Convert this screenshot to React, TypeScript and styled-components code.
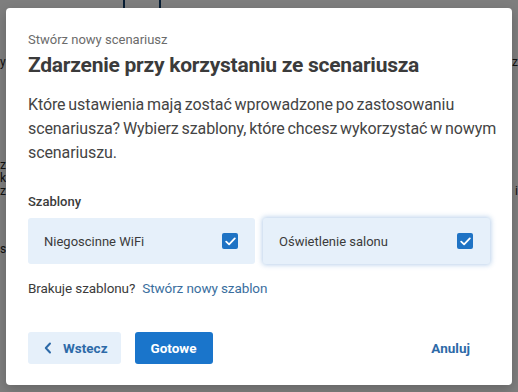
import React from 'react';
import styled, { createGlobalStyle } from 'styled-components';

const GlobalStyle = createGlobalStyle`
    html, body {
        margin: 0;
        padding: 0;
        height: 100%;
    }
    body {
        font-family: Roboto, 'Noto Sans', sans-serif;
        background: #fff;
    }
`;

const Page = styled.div`
    position: relative;
    width: 518px;
    height: 392px;
    overflow: hidden;
    background: #fdfdfd;
`;

const Behind = styled.div`
    display: flex;
    flex-direction: column;
    padding: 56px 0 0 0;
    color: #222;
    font-size: 12px;
    line-height: 13px;
`;

const BehindIcon = styled.div`
    position: absolute;
    top: -14px;
    left: 123px;
    width: 34px;
    height: 24px;
    border: 2px solid #0f3a66;
    border-radius: 2px;
`;

const BehindLine = styled.div<{ $gap?: number }>`
    display: flex;
    justify-content: space-between;
    margin-top: ${(p) => p.$gap ?? 0}px;
    white-space: nowrap;
`;

const Overlay = styled.div`
    position: absolute;
    inset: 0;
    background: rgba(0, 0, 0, 0.5);
    display: flex;
    align-items: flex-start;
    justify-content: center;
    padding-top: 8px;
`;

const Dialog = styled.div`
    width: 506px;
    height: 377px;
    box-sizing: border-box;
    background: #fff;
    border-radius: 4px;
    padding: 24px 22px 0 22px;
    display: flex;
    flex-direction: column;
    box-shadow: 0 4px 12px rgba(0, 0, 0, 0.2);
`;

const Eyebrow = styled.div`
    font-size: 13px;
    line-height: 16px;
    color: #6b6b6b;
`;

const Title = styled.h2`
    margin: 4px 0 0 0;
    font-size: 21px;
    line-height: 26px;
    font-weight: 700;
    color: #3b3b3b;
    letter-spacing: -0.25px;
`;

const Lead = styled.p`
    margin: 15px -12px 0 0;
    font-size: 16px;
    line-height: 24px;
    color: #444;
    letter-spacing: -0.1px;
    word-spacing: -1px;
`;

const SectionLabel = styled.div`
    margin-top: 29px;
    font-size: 13px;
    line-height: 16px;
    font-weight: 500;
    color: #3b3b3b;
`;

const CardGrid = styled.div`
    margin-top: 8px;
    display: grid;
    grid-template-columns: 1fr 1fr;
    gap: 8px;
`;

const Card = styled.label<{ $active?: boolean }>`
    height: 46px;
    box-sizing: border-box;
    display: flex;
    align-items: center;
    justify-content: space-between;
    padding: 0 17px 0 16px;
    border-radius: 3px;
    background: #e6f0fa;
    font-size: 13px;
    color: #3b3b3b;
    box-shadow: ${(p) => (p.$active ? '0 0 5px 1px rgba(100, 150, 210, 0.45)' : 'none')};
`;

const Check = styled.span`
    width: 16px;
    height: 16px;
    border-radius: 2px;
    background: #1f73c4;
    display: flex;
    align-items: center;
    justify-content: center;
`;

const Missing = styled.div`
    margin-top: 15px;
    font-size: 13.5px;
    line-height: 18px;
    color: #3b3b3b;
    letter-spacing: -0.1px;
`;

const Link = styled.a`
    margin-left: 7px;
    color: #3a6e9e;
    text-decoration: none;
`;

const Footer = styled.div`
    margin-top: 35px;
    display: flex;
    align-items: center;
    gap: 14px;
`;

const Button = styled.button<{ $variant: 'primary' | 'secondary' | 'plain' }>`
    height: 32px;
    box-sizing: border-box;
    border: none;
    border-radius: 3px;
    font-family: inherit;
    font-size: 13.5px;
    font-weight: 700;
    display: flex;
    align-items: center;
    gap: 11px;
    padding: 0 16px;
    cursor: pointer;
    background: ${(p) =>
        p.$variant === 'primary' ? '#1a75cb' : p.$variant === 'secondary' ? '#e6f0fa' : 'transparent'};
    color: ${(p) => (p.$variant === 'primary' ? '#fff' : '#2d6aa8')};
    &:first-child {
        padding: 0 13px 0 16px;
    }
    &:last-child {
        margin-left: auto;
        padding: 0 20px;
    }
`;

const CheckIcon = () => (
    <svg width="11" height="9" viewBox="0 0 11 9">
        <path d="M1.2 4.6 L4.1 7.3 L9.8 1.4" fill="none" stroke="#fff" strokeWidth="1.8" strokeLinecap="round" strokeLinejoin="round" />
    </svg>
);

const ChevronLeft = () => (
    <svg width="8" height="12" viewBox="0 0 8 12">
        <path d="M6 1.5 L1.8 6 L6 10.5" fill="none" stroke="#2d6aa8" strokeWidth="2" strokeLinecap="round" strokeLinejoin="round" />
    </svg>
);

const templates = [
    { name: 'Niegoscinne WiFi', active: false },
    { name: 'Oświetlenie salonu', active: true },
];

const App: React.FC = () => (
    <Page>
        <GlobalStyle />
        <BehindIcon />
        <Behind>
            <BehindLine>
                <span>y</span>
                <span>z</span>
            </BehindLine>
            <BehindLine $gap={90}>
                <span>ze</span>
            </BehindLine>
            <BehindLine>
                <span>k</span>
            </BehindLine>
            <BehindLine>
                <span>zy</span>
                <span>i</span>
            </BehindLine>
            <BehindLine $gap={45}>
                <span>st</span>
            </BehindLine>
        </Behind>
        <Overlay>
            <Dialog>
                <Eyebrow>Stwórz nowy scenariusz</Eyebrow>
                <Title>Zdarzenie przy korzystaniu ze scenariusza</Title>
                <Lead>
                    Które ustawienia mają zostać wprowadzone po zastosowaniu scenariusza? Wybierz szablony, które
                    chcesz wykorzystać w nowym scenariuszu.
                </Lead>
                <SectionLabel>Szablony</SectionLabel>
                <CardGrid>
                    {templates.map((t) => (
                        <Card key={t.name} $active={t.active}>
                            {t.name}
                            <Check>
                                <CheckIcon />
                            </Check>
                        </Card>
                    ))}
                </CardGrid>
                <Missing>
                    Brakuje szablonu?<Link href="#">Stwórz nowy szablon</Link>
                </Missing>
                <Footer>
                    <Button $variant="secondary">
                        <ChevronLeft />
                        Wstecz
                    </Button>
                    <Button $variant="primary">Gotowe</Button>
                    <Button $variant="plain">Anuluj</Button>
                </Footer>
            </Dialog>
        </Overlay>
    </Page>
);

export default App;
